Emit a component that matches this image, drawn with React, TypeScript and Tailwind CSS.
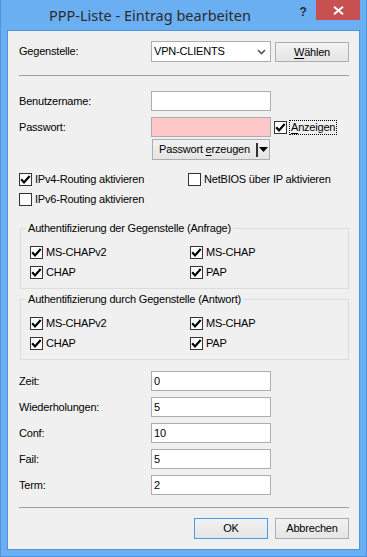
import React from "react";

function Check({ checked }: { checked: boolean }) {
  return (
    <span className="w-[13px] h-[13px] shrink-0 border border-[#333333] bg-white flex items-center justify-center">
      {checked ? (
        <svg width="11" height="11" viewBox="0 0 11 11" className="block">
          <path d="M1.2 5.3 L4 8.4 L9.7 2.1" fill="none" stroke="#000" strokeWidth="2.2" />
        </svg>
      ) : null}
    </span>
  );
}

function CheckItem({ checked, label }: { checked: boolean; label: string }) {
  return (
    <div className="flex items-center h-[13px]">
      <Check checked={checked} />
      <span className="ml-[3px] leading-[13px] whitespace-nowrap">{label}</span>
    </div>
  );
}

function TextBox({ value = "", pink = false }: { value?: string; pink?: boolean }) {
  return (
    <div
      className={
        "w-[120px] h-[20px] border border-[#ABADB3] pl-[2px] flex items-center leading-[13px] " +
        (pink ? "bg-[#FFC8C8]" : "bg-white")
      }
    >
      {value}
    </div>
  );
}

function FieldRow({ label, value, className = "" }: { label: string; value: string; className?: string }) {
  return (
    <div className={"flex items-center h-[20px] " + className}>
      <span className="w-[132px] leading-[13px]">{label}</span>
      <TextBox value={value} />
    </div>
  );
}

function Button({ children, w = "w-[74px]", focus = false }: { children: React.ReactNode; w?: string; focus?: boolean }) {
  return (
    <div
      className={
        w +
        " h-[21px] border bg-linear-to-b from-[#F2F2F2] to-[#E5E5E5] flex items-center justify-center leading-[13px] " +
        (focus ? "border-[#4A9AE8]" : "border-[#ADADAD]")
      }
    >
      {children}
    </div>
  );
}

function Group({ title, className = "" }: { title: string; className?: string }) {
  return (
    <fieldset className={"ml-[1px] border border-[#DCDCDC] " + className}>
      <legend className="ml-[5px] px-[2px] leading-[13px]">{title}</legend>
      <div className="pl-[9px] pt-[11px] pb-[9px] grid grid-cols-[160px_1fr] gap-y-[7px]">
        <CheckItem checked label="MS-CHAPv2" />
        <CheckItem checked label="MS-CHAP" />
        <CheckItem checked label="CHAP" />
        <CheckItem checked label="PAP" />
      </div>
    </fieldset>
  );
}

export default function App() {
  return (
    <div className="w-[367px] h-[557px] bg-[#6BAFF3] border-x border-b border-[#4F94DD] flex flex-col font-['Liberation_Sans',Arial,sans-serif] text-[11px] tracking-[-0.2px] text-black">
      {/* Title bar */}
      <div className="h-[30px] shrink-0 flex">
        <div className="flex-1 pl-[48px] pt-[5px] text-[14.5px] tracking-normal leading-[20px] text-[#2B2B2B] font-['Noto_Sans',sans-serif] whitespace-nowrap">
          PPP-Liste - Eintrag bearbeiten
        </div>
        <div className="w-[26px] h-[25px] text-center text-[12px] font-bold leading-[25px] text-[#2B2B2B] font-['Liberation_Sans',Arial,sans-serif]">
          ?
        </div>
        <div className="w-[44px] h-[20px] mr-[6px] bg-[#C75050] flex items-center justify-center">
          <svg width="11" height="9" viewBox="0 0 11 9" className="block">
            <path d="M1 0.8 L10 8.2 M10 0.8 L1 8.2" stroke="#fff" strokeWidth="2" fill="none" />
          </svg>
        </div>
      </div>

      {/* Client area */}
      <div className="flex-1 mx-[6px] mb-[6px] border border-[#4F94DD] bg-[#F0F0F0] flex flex-col pl-[11px] pr-[10px] pt-[10px]">
        {/* Gegenstelle */}
        <div className="flex items-start h-[21px]">
          <span className="w-[132px] h-[21px] flex items-center leading-[13px]">Gegenstelle:</span>
          <div className="w-[120px] h-[21px] border border-[#ABADB3] bg-white pl-[2px] flex items-center leading-[13px]">
            <span className="flex-1">VPN-CLIENTS</span>
            <svg width="9" height="6" viewBox="0 0 9 6" className="block mr-[4px]">
              <path d="M1 1 L4.5 4.5 L8 1" stroke="#555" strokeWidth="1.6" fill="none" />
            </svg>
          </div>
          <div className="ml-[4px] mt-[1px] w-[74px] h-[20px] border border-[#ADADAD] bg-linear-to-b from-[#F2F2F2] to-[#E5E5E5] flex items-center justify-center leading-[13px]">
            <span>
              <span className="underline underline-offset-2">W</span>ählen
            </span>
          </div>
        </div>

        <div className="mt-[13px] h-px bg-[#A0A0A0]" />

        <FieldRow label="Benutzername:" value="" className="mt-[15px]" />

        {/* Passwort */}
        <div className="mt-[6px] flex items-center h-[20px]">
          <span className="w-[132px] leading-[13px]">Passwort:</span>
          <TextBox pink />
          <div className="ml-[3px] flex items-center">
            <Check checked />
            <span className="ml-[2px] border border-dotted border-black px-[1px] leading-[13px]">
              <span className="underline underline-offset-2">A</span>nzeigen
            </span>
          </div>
        </div>

        {/* Passwort erzeugen split button */}
        <div className="mt-[2px] flex">
          <div className="ml-[133px] w-[118px] h-[21px] border border-[#ADADAD] bg-linear-to-b from-[#F2F2F2] to-[#E5E5E5] flex items-center">
            <div className="w-[103px] text-center leading-[13px]">
              Passwort <span className="underline underline-offset-2">e</span>rzeugen
            </div>
            <div className="w-[2px] h-[14px] bg-[#333333]" />
            <div className="flex-1 flex items-center justify-center">
              <svg width="9" height="5" viewBox="0 0 9 5" className="block">
                <path d="M0 0 L9 0 L4.5 5 Z" fill="#000" />
              </svg>
            </div>
          </div>
        </div>

        {/* Routing checkboxes */}
        <div className="mt-[13px] grid grid-cols-[169px_1fr] gap-y-[7px]">
          <CheckItem checked label="IPv4-Routing aktivieren" />
          <CheckItem checked={false} label="NetBIOS über IP aktivieren" />
          <CheckItem checked={false} label="IPv6-Routing aktivieren" />
        </div>

        <Group title="Authentifizierung der Gegenstelle (Anfrage)" className="mt-[16px]" />
        <Group title="Authentifizierung durch Gegenstelle (Antwort)" className="mt-[4px]" />

        <FieldRow label="Zeit:" value="0" className="mt-[11px]" />
        <FieldRow label="Wiederholungen:" value="5" className="mt-[6px]" />
        <FieldRow label="Conf:" value="10" className="mt-[6px]" />
        <FieldRow label="Fail:" value="5" className="mt-[6px]" />
        <FieldRow label="Term:" value="2" className="mt-[6px]" />

        <div className="mt-[12px] h-px bg-[#A0A0A0]" />

        <div className="mt-[10px] flex justify-end gap-[7px]">
          <Button focus>OK</Button>
          <Button>Abbrechen</Button>
        </div>
      </div>
    </div>
  );
}
